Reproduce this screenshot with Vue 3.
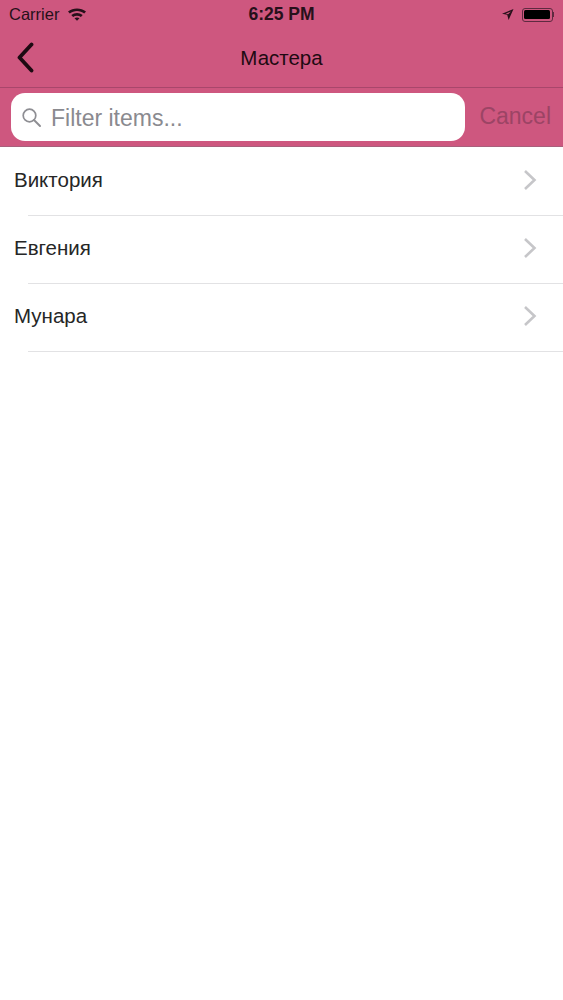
<template>
  <div class="screen">
    <header class="head">
      <div class="status">
        <div class="status-left">
          <span>Carrier</span>
          <svg class="wifi" width="20" height="14" viewBox="0 0 20 14">
            <path d="M1 4.600C6 .3 14 .3 19 4.600l-1.800 2C13.200 3.200 6.800 3.200 2.800 6.600z" fill="#27101a"/>
            <path d="M4.300 8C7.600 5.300 12.400 5.300 15.700 8l-1.800 2C11.500 8.200 8.500 8.200 6.100 10z" fill="#27101a"/>
            <path d="M7.500 11.200C8.900 10.200 11.100 10.200 12.500 11.200L10 13.800z" fill="#27101a"/>
          </svg>
        </div>
        <span class="time">6:25 PM</span>
        <div class="status-right">
          <svg width="13" height="13" viewBox="0 0 13 13">
            <path d="M12.500 1L1 5.800l5.200 1 1.400 5.200zM10 3.400L4.600 5.700l2.600.5z" fill="#27101a" fill-rule="evenodd"/>
          </svg>
          <div class="battery"><div class="battery-fill"></div></div>
          <div class="battery-tip"></div>
        </div>
      </div>
      <div class="nav">
        <svg class="back" width="20" height="32" viewBox="0 0 20 32">
          <path d="M15.500 2.500L3.500 15.500l12 13" fill="none" stroke="#1d0a12" stroke-width="3.800" stroke-linecap="round" stroke-linejoin="round"/>
        </svg>
        <span class="title">Мастера</span>
      </div>
      <div class="search-row">
        <div class="search">
          <svg width="21" height="21" viewBox="0 0 21 21">
            <circle cx="8.500" cy="8.500" r="6.300" fill="none" stroke="#8e8e93" stroke-width="1.700"/>
            <path d="M13 13l6 6" stroke="#8e8e93" stroke-width="2" stroke-linecap="round"/>
          </svg>
          <span class="placeholder">Filter items...</span>
        </div>
        <span class="cancel">Cancel</span>
      </div>
    </header>
    <ul class="list">
      <li v-for="name in masters" :key="name" class="row">
        <span class="name">{{ name }}</span>
        <svg width="14" height="22" viewBox="0 0 14 22">
          <path d="M2 2l9.500 9L2 20" fill="none" stroke="#c6c6c9" stroke-width="2.600"/>
        </svg>
      </li>
    </ul>
  </div>
</template>

<script setup>
const masters = ['Виктория', 'Евгения', 'Мунара'];
</script>

<style>
html, body {
  margin: 0;
  background: #fff;
}
</style>

<style scoped>
.screen {
  height: 1000px;
  overflow: hidden;
  background: #fff;
  font-family: "Liberation Sans", Arial, sans-serif;
}
.head {
  background: #ce577f;
  border-bottom: 1px solid #a8607c;
  height: 146px;
}
.status {
  height: 29px;
  padding: 0 9px;
  display: grid;
  grid-template-columns: 1fr auto 1fr;
  align-items: center;
  color: #27101a;
  font-size: 16.500px;
}
.status-left {
  display: flex;
  align-items: center;
  gap: 8px;
}
.wifi {
  margin-bottom: 2px;
}
.time {
  font-weight: 700;
  font-size: 17.500px;
}
.status-right {
  display: flex;
  justify-content: flex-end;
  align-items: center;
}
.battery {
  width: 26px;
  height: 9px;
  margin-left: 8px;
  border: 1px solid #5e2a40;
  border-radius: 3px;
  padding: 1.500px;
  box-sizing: content-box;
}
.battery-fill {
  height: 100%;
  background: #000;
  border-radius: 1.500px;
}
.battery-tip {
  width: 1.500px;
  height: 5px;
  background: #5e2a40;
}
.nav {
  height: 58px;
  position: relative;
  display: flex;
  align-items: center;
  justify-content: center;
  border-bottom: 1px solid #a9466b;
}
.back {
  position: absolute;
  left: 16px;
  top: 13px;
}
.title {
  font-size: 20.500px;
  color: #1e0a12;
}
.search-row {
  display: flex;
  align-items: center;
  padding: 5px 12px 0 11px;
  gap: 14px;
}
.search {
  flex: 1;
  height: 48px;
  background: #fff;
  border-radius: 14px;
  display: flex;
  align-items: center;
  gap: 9px;
  padding-left: 10px;
  color: #8a8a8f;
  font-size: 23px;
}
.placeholder {
  margin-top: 2px;
}
.cancel {
  color: #9c4465;
  font-size: 23px;
  margin-top: -1px;
}
.list {
  list-style: none;
  margin: 0;
  padding: 1px 0 0;
}
.row {
  height: 68px;
  box-sizing: border-box;
  padding: 0 26px 4px 14px;
  display: flex;
  align-items: center;
  justify-content: space-between;
  position: relative;
}
.row::after {
  content: "";
  position: absolute;
  left: 28px;
  right: 0;
  bottom: 0;
  height: 1px;
  background: #e2e2e4;
}
.name {
  font-size: 20.500px;
  color: #262626;
}
</style>
